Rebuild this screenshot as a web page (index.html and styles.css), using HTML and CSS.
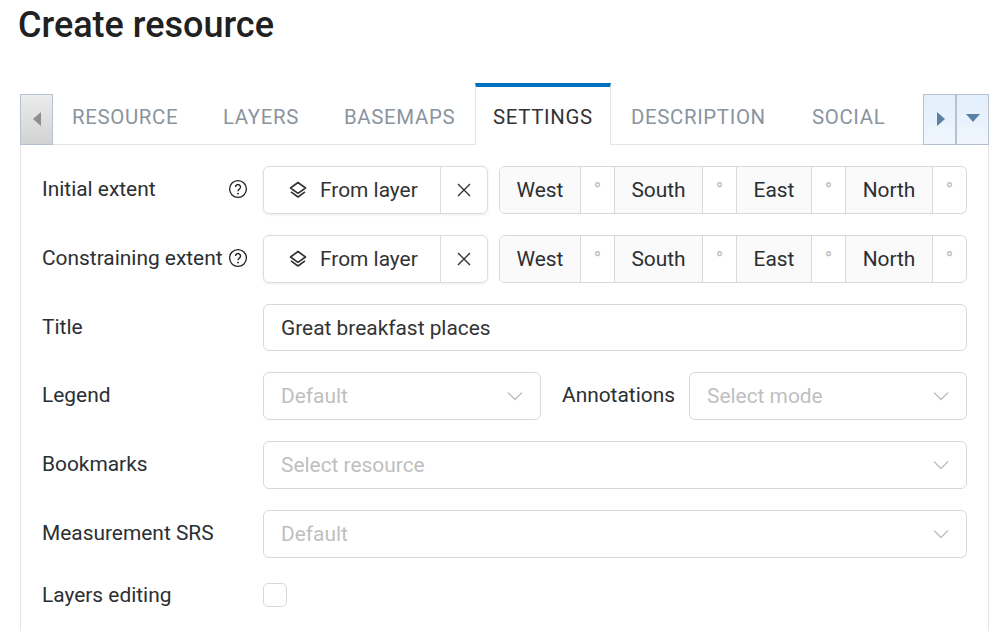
FILE: index.html
```html
<!DOCTYPE html>
<html lang="en">
<head>
  <meta charset="UTF-8" />
  <title>Create resource</title>
  <link rel="stylesheet" href="styles.css">
</head>
<body>
  <h1>Create resource</h1>

  <div class="tabs">
    <div class="scroll-btn scroll-left"><span class="arrow-left"></span></div>
    <div class="tab tab-resource">RESOURCE</div>
    <div class="tab tab-layers">LAYERS</div>
    <div class="tab tab-basemaps">BASEMAPS</div>
    <div class="tab tab-settings active">SETTINGS</div>
    <div class="tab tab-description">DESCRIPTION</div>
    <div class="tab tab-social">SOCIAL</div>
    <div class="scroll-btn scroll-right"><span class="arrow-right"></span></div>
    <div class="scroll-btn scroll-menu"><span class="arrow-down"></span></div>
  </div>

  <div class="panel">
    <div class="row row-extent">
      <label>Initial extent
        <svg class="help" viewBox="0 0 20 20" width="20" height="20"><circle cx="10" cy="10" r="8.4" fill="none" stroke="#222" stroke-width="1.3"/><path d="M7.5 8a2.5 2.5 0 1 1 3.9 2.1c-.9.6-1.4 1-1.4 2.2" fill="none" stroke="#222" stroke-width="1.3"/><circle cx="10" cy="14.6" r=".95" fill="#222"/></svg>
      </label>
      <div class="extent">
        <div class="from-layer">
          <div class="from-btn">
            <svg viewBox="0 0 18 18" width="18" height="18"><path d="M9 1.5 16.5 7 9 12.3 1.5 7Z" fill="none" stroke="#333" stroke-width="1.6" stroke-linejoin="round"/><path d="M2 10.8 9 16 16 10.8" fill="none" stroke="#333" stroke-width="1.6" stroke-linejoin="round"/></svg>
            From layer
          </div>
          <div class="clear-btn"><svg viewBox="0 0 14 14" width="14" height="14"><path d="M1 1 13 13M13 1 1 13" stroke="#333" stroke-width="1.4"/></svg></div>
        </div>
        <div class="coords">
          <span class="addon w-west">West</span><span class="deg">°</span>
          <span class="addon w-south">South</span><span class="deg">°</span>
          <span class="addon w-east">East</span><span class="deg">°</span>
          <span class="addon w-north">North</span><span class="deg deg-last">°</span>
        </div>
      </div>
    </div>

    <div class="row row-extent">
      <label>Constraining extent
        <svg class="help" viewBox="0 0 20 20" width="20" height="20"><circle cx="10" cy="10" r="8.4" fill="none" stroke="#222" stroke-width="1.3"/><path d="M7.5 8a2.5 2.5 0 1 1 3.9 2.1c-.9.6-1.4 1-1.4 2.2" fill="none" stroke="#222" stroke-width="1.3"/><circle cx="10" cy="14.6" r=".95" fill="#222"/></svg>
      </label>
      <div class="extent">
        <div class="from-layer">
          <div class="from-btn">
            <svg viewBox="0 0 18 18" width="18" height="18"><path d="M9 1.5 16.5 7 9 12.3 1.5 7Z" fill="none" stroke="#333" stroke-width="1.6" stroke-linejoin="round"/><path d="M2 10.8 9 16 16 10.8" fill="none" stroke="#333" stroke-width="1.6" stroke-linejoin="round"/></svg>
            From layer
          </div>
          <div class="clear-btn"><svg viewBox="0 0 14 14" width="14" height="14"><path d="M1 1 13 13M13 1 1 13" stroke="#333" stroke-width="1.4"/></svg></div>
        </div>
        <div class="coords">
          <span class="addon w-west">West</span><span class="deg">°</span>
          <span class="addon w-south">South</span><span class="deg">°</span>
          <span class="addon w-east">East</span><span class="deg">°</span>
          <span class="addon w-north">North</span><span class="deg deg-last">°</span>
        </div>
      </div>
    </div>

    <div class="row row-title">
      <label>Title</label>
      <div class="input">Great breakfast places</div>
    </div>

    <div class="row">
      <label>Legend</label>
      <div class="split">
        <div class="select">Default<svg class="chevron" viewBox="0 0 16 10" width="16" height="10"><path d="M1 1.5 8 8.5 15 1.5" fill="none" stroke="#bfbfbf" stroke-width="1.4"/></svg></div>
        <span class="inline-label">Annotations</span>
        <div class="select">Select mode<svg class="chevron" viewBox="0 0 16 10" width="16" height="10"><path d="M1 1.5 8 8.5 15 1.5" fill="none" stroke="#bfbfbf" stroke-width="1.4"/></svg></div>
      </div>
    </div>

    <div class="row">
      <label>Bookmarks</label>
      <div class="select">Select resource<svg class="chevron" viewBox="0 0 16 10" width="16" height="10"><path d="M1 1.5 8 8.5 15 1.5" fill="none" stroke="#bfbfbf" stroke-width="1.4"/></svg></div>
    </div>

    <div class="row">
      <label>Measurement SRS</label>
      <div class="select">Default<svg class="chevron" viewBox="0 0 16 10" width="16" height="10"><path d="M1 1.5 8 8.5 15 1.5" fill="none" stroke="#bfbfbf" stroke-width="1.4"/></svg></div>
    </div>

    <div class="row row-check">
      <label>Layers editing</label>
      <div class="checkbox"></div>
    </div>
  </div>
</body>
</html>
```

FILE: styles.css
```css
html, body { height: 100%; overflow: hidden; }
body { margin: 0; padding: 0 16px 0 20px; background: #fff; color: #212529; font-family: Roboto, "Liberation Sans", sans-serif; font-size: 20.9px; }
* { box-sizing: border-box; }
h1 { margin: 0; padding-top: 5px; height: 83px; margin-left: -2px; font-size: 36px; font-weight: 500; line-height: 40px; color: #212121; }

.tabs { display: flex; align-items: flex-end; height: 62px; width: 969px; }
.tab { flex: none; height: 51px; padding-left: 18px; line-height: 46px; border-bottom: 1px solid #e5e5e5; font-size: 20.4px; letter-spacing: 0.65px; color: #8a949e; }
.tab-resource { width: 152px; padding-left: 19px; }
.tab-layers { width: 121px; }
.tab-basemaps { width: 149px; }
.tab-settings { width: 136px; }
.tab-description { width: 183px; padding-left: 20px; }
.tab-social { width: 129px; }
.tab.active { height: 62px; padding-left: 17px; padding-top: 7px; color: #333; border-top: 4px solid #0070c0; border-left: 1px solid #e5e5e5; border-right: 1px solid #e5e5e5; border-bottom: 0; }

.scroll-btn { width: 33px; height: 51px; border: 1px solid #b5c0d0; display: flex; align-items: center; justify-content: center; flex: none; }
.scroll-left { background: linear-gradient(#ececec, #d2d2d2); }
.scroll-right, .scroll-menu { background: linear-gradient(#e2eefb, #f0f6fd); }
.arrow-left { border: 7px solid transparent; border-left: 0; border-right: 8px solid #8e8e8e; margin-top: -2px; }
.arrow-right { border: 7px solid transparent; border-right: 0; border-left: 8px solid #5b80a6; margin: -2px 0 0 3px; }
.arrow-down { border: 7px solid transparent; border-bottom: 0; border-top: 8px solid #5b80a6; margin-top: -3px; }

.panel { width: 969px; height: 486px; padding: 21px 21px 0 21px; border-left: 1px solid #e5e5e5; border-right: 1px solid #e5e5e5; }
.row { display: flex; align-items: center; height: 48px; margin-bottom: 21px; }
.row-title { height: 47px; }
.row-check { height: 24px; margin-top: 25px; margin-bottom: 0; }
label { flex: none; width: 221px; display: flex; align-items: center; justify-content: space-between; padding-right: 15px; color: #2b2f33; position: relative; top: -1px; }
.row-check label { top: 0; }

.extent { display: flex; flex: 1; gap: 11px; }
.from-layer { display: flex; width: 225px; height: 48px; border: 1px solid #dcdcdc; border-radius: 6px; box-shadow: 0 1px 3px rgba(0,0,0,0.08); }
.from-btn { display: flex; align-items: center; gap: 13px; width: 177px; padding-left: 25px; border-right: 1px solid #dcdcdc; color: #333; }
.clear-btn { display: flex; align-items: center; justify-content: center; flex: 1; }

.coords { display: flex; flex: 1; min-width: 0; height: 48px; border: 1px solid #d9d9d9; border-radius: 6px; overflow: hidden; }
.addon { display: flex; align-items: center; justify-content: center; background: #fafafa; border-right: 1px solid #d9d9d9; color: #2b2f33; }
.w-west { width: 81px; }
.w-south { width: 88px; }
.w-east { width: 75px; }
.w-north { width: 87px; }
.deg { width: 34px; padding-top: 13px; border-right: 1px solid #d9d9d9; text-align: center; font-size: 20px; line-height: 20px; color: #bdbdbd; }
.deg-last { border-right: 0; flex: 1; width: 0; }

.input, .select { flex: 1; height: 100%; padding-left: 17px; border: 1px solid #d9d9d9; border-radius: 6px; display: flex; align-items: center; color: #333; }
.select { justify-content: space-between; padding-right: 17px; color: #bfbfbf; }
.split { display: flex; flex: 1; align-items: center; height: 48px; }
.inline-label { width: 148px; padding-left: 21px; color: #2b2f33; position: relative; top: -1px; }
.checkbox { width: 24px; height: 24px; border: 1px solid #d9d9d9; border-radius: 5px; }
```
